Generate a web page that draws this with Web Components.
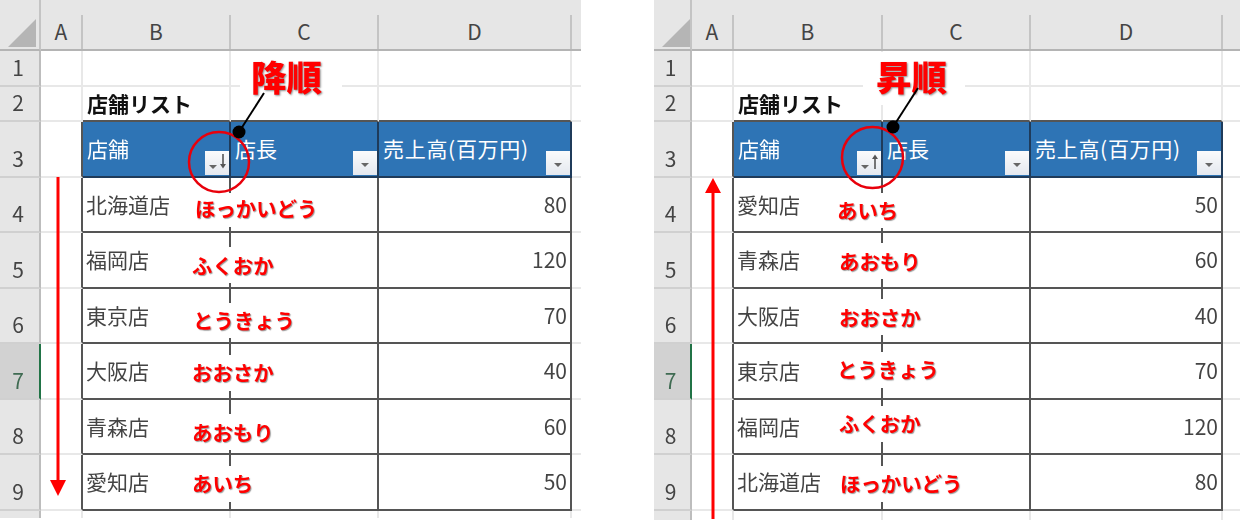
<!DOCTYPE html>
<html lang="ja">
<head>
<meta charset="utf-8">
<title>降順と昇順</title>
<style>
  html, body { margin: 0; height: 520px; overflow: hidden; background: #fff; }
  body { display: flex; align-items: flex-start; font-family: "Noto Sans CJK JP", "Noto Sans", sans-serif; }
  #gap { width: 73px; flex: none; }
</style>
</head>
<body>

<excel-sheet order="desc" cols="41 42 148 148 193 9" height="518">
  <sort-label text="降順" x="240" width="102" shift="9"></sort-label>
  <kana-note x="191" top="193" h="34" dy="-2">ほっかいどう</kana-note>
  <kana-note x="188" top="247" h="36">ふくおか</kana-note>
  <kana-note x="189" top="303" h="35">とうきょう</kana-note>
  <kana-note x="188" top="355" h="36" dy="-1">おおさか</kana-note>
  <kana-note x="188" top="414" h="36">あおもり</kana-note>
  <kana-note x="188" top="466" h="36" dy="-1">あいち</kana-note>
  <sort-marks dir="down" arrow="58" ring="219 162 30" dot="239 132" tail="264 93"></sort-marks>
</excel-sheet>

<div id="gap"></div>

<excel-sheet order="asc" cols="38 42 149 148 192 17" height="520" more>
  <sort-label text="昇順" x="209" width="102" shift="5"></sort-label>
  <kana-note x="179" top="193" h="35">あいち</kana-note>
  <kana-note x="181" top="243" h="36">あおもり</kana-note>
  <kana-note x="181" top="299" h="36">おおさか</kana-note>
  <kana-note x="179" top="352" h="36" dy="-1">とうきょう</kana-note>
  <kana-note x="181" top="406" h="36" dy="-1">ふくおか</kana-note>
  <kana-note x="182" top="466" h="36" dy="-1">ほっかいどう</kana-note>
  <sort-marks dir="up" arrow="59" ring="218.5 157.5 30.5" dot="239 127" tail="264 88"></sort-marks>
</excel-sheet>

<script>
const STORES = [
    ["北海道店", 80],
    ["福岡店", 120],
    ["東京店", 70],
    ["大阪店", 40],
    ["青森店", 60],
    ["愛知店", 50],
];

class FilterButton extends HTMLElement {
    constructor() {
        super();
        this.attachShadow({ mode: "open" });
    }

    connectedCallback() {
        const sort = this.getAttribute("sort");
        let mark = '<path d="M8 12h8l-4 4z" fill="#666"/>';
        if (sort) {
            mark = '<path d="M4 14h8l-4 4z" fill="#666"/>';
            if (sort === "down") {
                mark += '<path d="M18 3v11" stroke="#555" stroke-width="1.6"/><path d="M15 13h6l-3 4.5z" fill="#555"/>';
            } else {
                mark += '<path d="M18 7v11" stroke="#555" stroke-width="1.6"/><path d="M15 8h6l-3-4.5z" fill="#555"/>';
            }
        }
        this.shadowRoot.innerHTML = `
            <style>
                :host {
                    display: block;
                    flex: none;
                    width: 24px;
                    height: 24px;
                    margin-bottom: 1px;
                    background: linear-gradient(#fafbfc, #e4e8ef);
                }
                svg { display: block; }
            </style>
            <svg width="24" height="24" viewBox="0 0 24 24">${mark}</svg>
        `;
    }
}

class KanaNote extends HTMLElement {
    constructor() {
        super();
        this.attachShadow({ mode: "open" });
    }

    connectedCallback() {
        const dy = this.getAttribute("dy") || 0;
        this.shadowRoot.innerHTML = `
            <style>
                :host {
                    position: absolute;
                    left: ${this.getAttribute("x")}px;
                    top: ${this.getAttribute("top")}px;
                    height: ${this.getAttribute("h")}px;
                    display: flex;
                    align-items: center;
                    padding: 0 4px;
                    background: #fff;
                    color: #f00;
                    font-size: 20.4px;
                    font-weight: 700;
                    line-height: 1;
                    white-space: nowrap;
                    text-shadow: 1px 1px 1px rgba(0, 0, 0, 0.4);
                }
                span { display: block; transform: translateY(${dy}px); }
            </style>
            <span><slot></slot></span>
        `;
    }
}

class SortLabel extends HTMLElement {
    constructor() {
        super();
        this.attachShadow({ mode: "open" });
    }

    connectedCallback() {
        this.shadowRoot.innerHTML = `
            <style>
                :host {
                    position: absolute;
                    left: ${this.getAttribute("x")}px;
                    top: 52px;
                    width: ${this.getAttribute("width")}px;
                    height: 53px;
                    display: flex;
                    justify-content: center;
                    padding-top: 2px;
                    padding-right: ${this.getAttribute("shift")}px;
                    box-sizing: border-box;
                    background: #fff;
                    color: #f00;
                    font-size: 35.5px;
                    font-weight: 900;
                    line-height: 44px;
                    text-shadow: 1px 1px 2px rgba(0, 0, 0, 0.45);
                }
            </style>
            ${this.getAttribute("text")}
        `;
    }
}

class SortMarks extends HTMLElement {
    constructor() {
        super();
        this.attachShadow({ mode: "open" });
    }

    connectedCallback() {
        const x = +this.getAttribute("arrow");
        const [cx, cy, r] = this.getAttribute("ring").split(" ");
        const [dx, dy] = this.getAttribute("dot").split(" ");
        const [tx, ty] = this.getAttribute("tail").split(" ");
        const arrow = this.getAttribute("dir") === "down"
            ? `<path d="M${x} 177V484" stroke="#f00" stroke-width="3"/><path d="M${x - 8} 480h16l-8 16z" fill="#f00"/>`
            : `<path d="M${x} 190V519" stroke="#f00" stroke-width="3"/><path d="M${x - 8} 193h16l-8 -15z" fill="#f00"/>`;
        this.shadowRoot.innerHTML = `
            <style>
                :host { position: absolute; inset: 0; pointer-events: none; }
                svg { display: block; }
            </style>
            <svg width="100%" height="100%">
                ${arrow}
                <circle cx="${cx}" cy="${cy}" r="${r}" fill="none" stroke="#e8000b" stroke-width="2.5"/>
                <path d="M${dx} ${dy}L${tx} ${ty}" stroke="#000" stroke-width="2"/>
                <circle cx="${dx}" cy="${dy}" r="6.5" fill="#000"/>
            </svg>
        `;
    }
}

class ExcelSheet extends HTMLElement {
    constructor() {
        super();
        this.attachShadow({ mode: "open" });
    }

    connectedCallback() {
        this.render();
    }

    rowHead(n, selected) {
        return `<div class="rowhead ${selected ? "selected" : ""}">${n}</div>`;
    }

    render() {
        const cols = this.getAttribute("cols").split(" ").map(Number);
        const total = cols.reduce((a, b) => a + b, 0);
        const order = this.getAttribute("order");
        const list = order === "desc" ? STORES : [...STORES].reverse();
        const plain = '<div class="cell"></div>';
        const spare = '<div class="cell spare"></div>';

        let html = '<div class="corner"><svg width="100%" height="100%"><path d="M36 19V47H8z" fill="#b5b5b5"/></svg></div>';
        ["A", "B", "C", "D"].forEach(c => {
            html += `<div class="colhead sep">${c}</div>`;
        });
        html += '<div class="colhead"></div>';

        // rows 1 and 2 above the table
        html += this.rowHead(1) + plain.repeat(4) + spare;
        html += this.rowHead(2) + plain
            + '<div class="cell title under">店舗リスト</div><div class="cell under"></div><div class="cell under"></div>' + spare;

        // header row
        html += this.rowHead(3) + '<div class="cell edge"></div>';
        html += `<div class="cell head"><span>店舗</span><filter-button sort="${order === "desc" ? "down" : "up"}"></filter-button></div>`;
        html += '<div class="cell head"><span>店長</span><filter-button></filter-button></div>';
        html += '<div class="cell head"><span class="wide">売上高(百万円)</span><filter-button></filter-button></div>';
        html += spare;

        list.forEach(([name, sales], i) => {
            html += this.rowHead(i + 4, i === 3);
            html += '<div class="cell edge"></div>';
            html += `<div class="cell body">${name}</div>`;
            html += '<div class="cell body"></div>';
            html += `<div class="cell body num">${sales}</div>`;
            html += spare;
        });

        // the row under the table
        html += this.rowHead(this.hasAttribute("more") ? 10 : "") + plain.repeat(4) + spare;

        this.shadowRoot.innerHTML = `
            <style>
                :host {
                    display: block;
                    position: relative;
                    flex: none;
                    width: ${total}px;
                    height: ${this.getAttribute("height")}px;
                    overflow: hidden;
                    filter: blur(0.35px);
                    color: #444;
                    font-family: "Noto Sans CJK JP", "Noto Sans", sans-serif;
                    font-size: 21px;
                }
                .grid {
                    display: grid;
                    grid-template-columns: ${cols.map(c => c + "px").join(" ")};
                    grid-template-rows: 51px 36px 35px 56px 55px 56px 55px 56px 55px 56px 36px;
                }
                .grid > div { box-sizing: border-box; min-width: 0; }
                .corner { background: #e6e6e6; border-right: 2px solid #c4c4c4; border-bottom: 2px solid #b4b4b4; }
                .corner svg { display: block; }
                .colhead {
                    background: #e6e6e6;
                    border-bottom: 2px solid #b4b4b4;
                    display: flex;
                    align-items: center;
                    justify-content: center;
                    padding: 12px 2px 0 0;
                    position: relative;
                }
                .sep::after {
                    content: "";
                    position: absolute;
                    right: 0;
                    top: 15px;
                    bottom: 0;
                    width: 2px;
                    background: #c4c4c4;
                }
                .rowhead {
                    background: #e6e6e6;
                    border-right: 2px solid #bdbdbd;
                    border-bottom: 2px solid #d0d0d0;
                    display: flex;
                    align-items: flex-end;
                    justify-content: center;
                    padding-right: 3px;
                    line-height: 36px;
                    white-space: nowrap;
                }
                .rowhead.selected { background: #d2d2d2; border-right-color: #217346; color: #3f6b52; }
                .cell {
                    background: #fff;
                    border-right: 2px solid #e8e8e8;
                    border-bottom: 2px solid #e8e8e8;
                }
                .cell.spare { border-right: 0; }
                .cell.under { border-bottom-color: #555; }
                .cell.edge { border-right-color: #555; }
                .title { color: #111; font-weight: 700; display: flex; align-items: center; padding: 0 0 2px 4px; }
                .head {
                    background: #2e74b5;
                    color: #fff;
                    border-right-color: #1f3b5a;
                    border-bottom-color: #1f3b5a;
                    display: flex;
                    align-items: center;
                    justify-content: space-between;
                    padding-left: 4px;
                    white-space: nowrap;
                }
                .head span { margin-bottom: 2px; }
                .head span.wide { letter-spacing: 0.7px; }
                .head filter-button { align-self: flex-end; }
                .body {
                    border-right-color: #555;
                    border-bottom-color: #555;
                    display: flex;
                    align-items: center;
                    padding: 0 3px 2px 3px;
                }
                .num { justify-content: flex-end; }
            </style>
            <div class="grid">${html}</div>
            <slot></slot>
        `;
    }
}

customElements.define("filter-button", FilterButton);
customElements.define("kana-note", KanaNote);
customElements.define("sort-label", SortLabel);
customElements.define("sort-marks", SortMarks);
customElements.define("excel-sheet", ExcelSheet);
</script>
</body>
</html>
